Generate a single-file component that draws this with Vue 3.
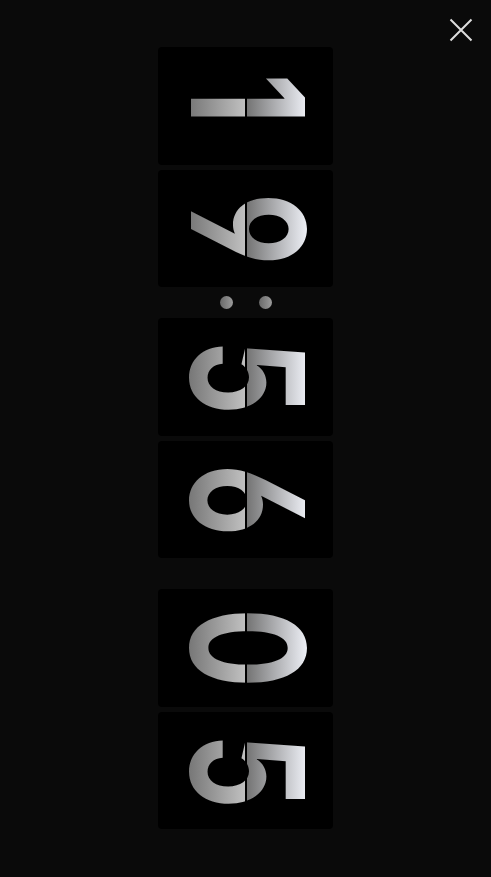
<script setup>
const groups = [['1', '9'], ['5', '6'], ['0', '5']]
</script>

<template>
  <main class="clock">
    <button class="close" aria-label="Close">
      <svg width="26" height="26" viewBox="0 0 26 26">
        <path d="M2.5 2.500L23.500 23.500M23.500 2.500L2.500 23.500" stroke="#dedede" stroke-width="2" fill="none" />
      </svg>
    </button>
    <template v-for="(group, g) in groups" :key="g">
      <section class="group">
        <div v-for="(d, i) in group" :key="i" class="card">
          <span class="digit" :class="{ one: d === '1' }">{{ d }}</span>
        </div>
      </section>
      <div v-if="g < 2" class="sep">
        <template v-if="g === 0"><i class="dot"></i><i class="dot"></i></template>
      </div>
    </template>
  </main>
</template>

<style>
html, body { margin: 0; background: #0a0a0a; }
</style>

<style scoped>
.clock {
  position: relative;
  width: 491px;
  height: 877px;
  box-sizing: border-box;
  padding-bottom: 1px;
  background: #0a0a0a;
  display: flex;
  flex-direction: column;
  align-items: center;
  justify-content: center;
  overflow: hidden;
}
.close {
  position: absolute;
  top: 17px;
  right: 17px;
  padding: 0;
  border: 0;
  background: none;
  line-height: 0;
}
.group { display: flex; flex-direction: column; gap: 5px; }
.sep {
  height: 31px;
  display: flex;
  align-items: center;
  justify-content: center;
  gap: 26px;
}
.dot {
  width: 13px;
  height: 13px;
  border-radius: 50%;
  background: linear-gradient(90deg, #696969, #9c9c9c);
}
.card {
  position: relative;
  width: 175px;
  height: 117.5px;
  background: #000;
  border-radius: 4px;
}
.card::after {
  content: "";
  position: absolute;
  left: 87px;
  top: 0;
  bottom: 0;
  width: 2px;
  background: #000;
}
.digit {
  display: block;
  width: 175px;
  height: 117.5px;
  writing-mode: vertical-rl;
  text-align: center;
  font-family: Inter, sans-serif;
  font-feature-settings: "cv03", "cv04";
  font-weight: 650;
  font-size: 157px;
  line-height: 170px;
  transform: scaleY(0.76);
  color: transparent;
  -webkit-background-clip: text;
  background-clip: text;
  background-image: linear-gradient(90deg, #777 31px, #c0c0c0 87px, #747474 89px, #eceef4 148px);
}
.digit.one { transform: translateY(-7px) scaleY(0.76); }
</style>
